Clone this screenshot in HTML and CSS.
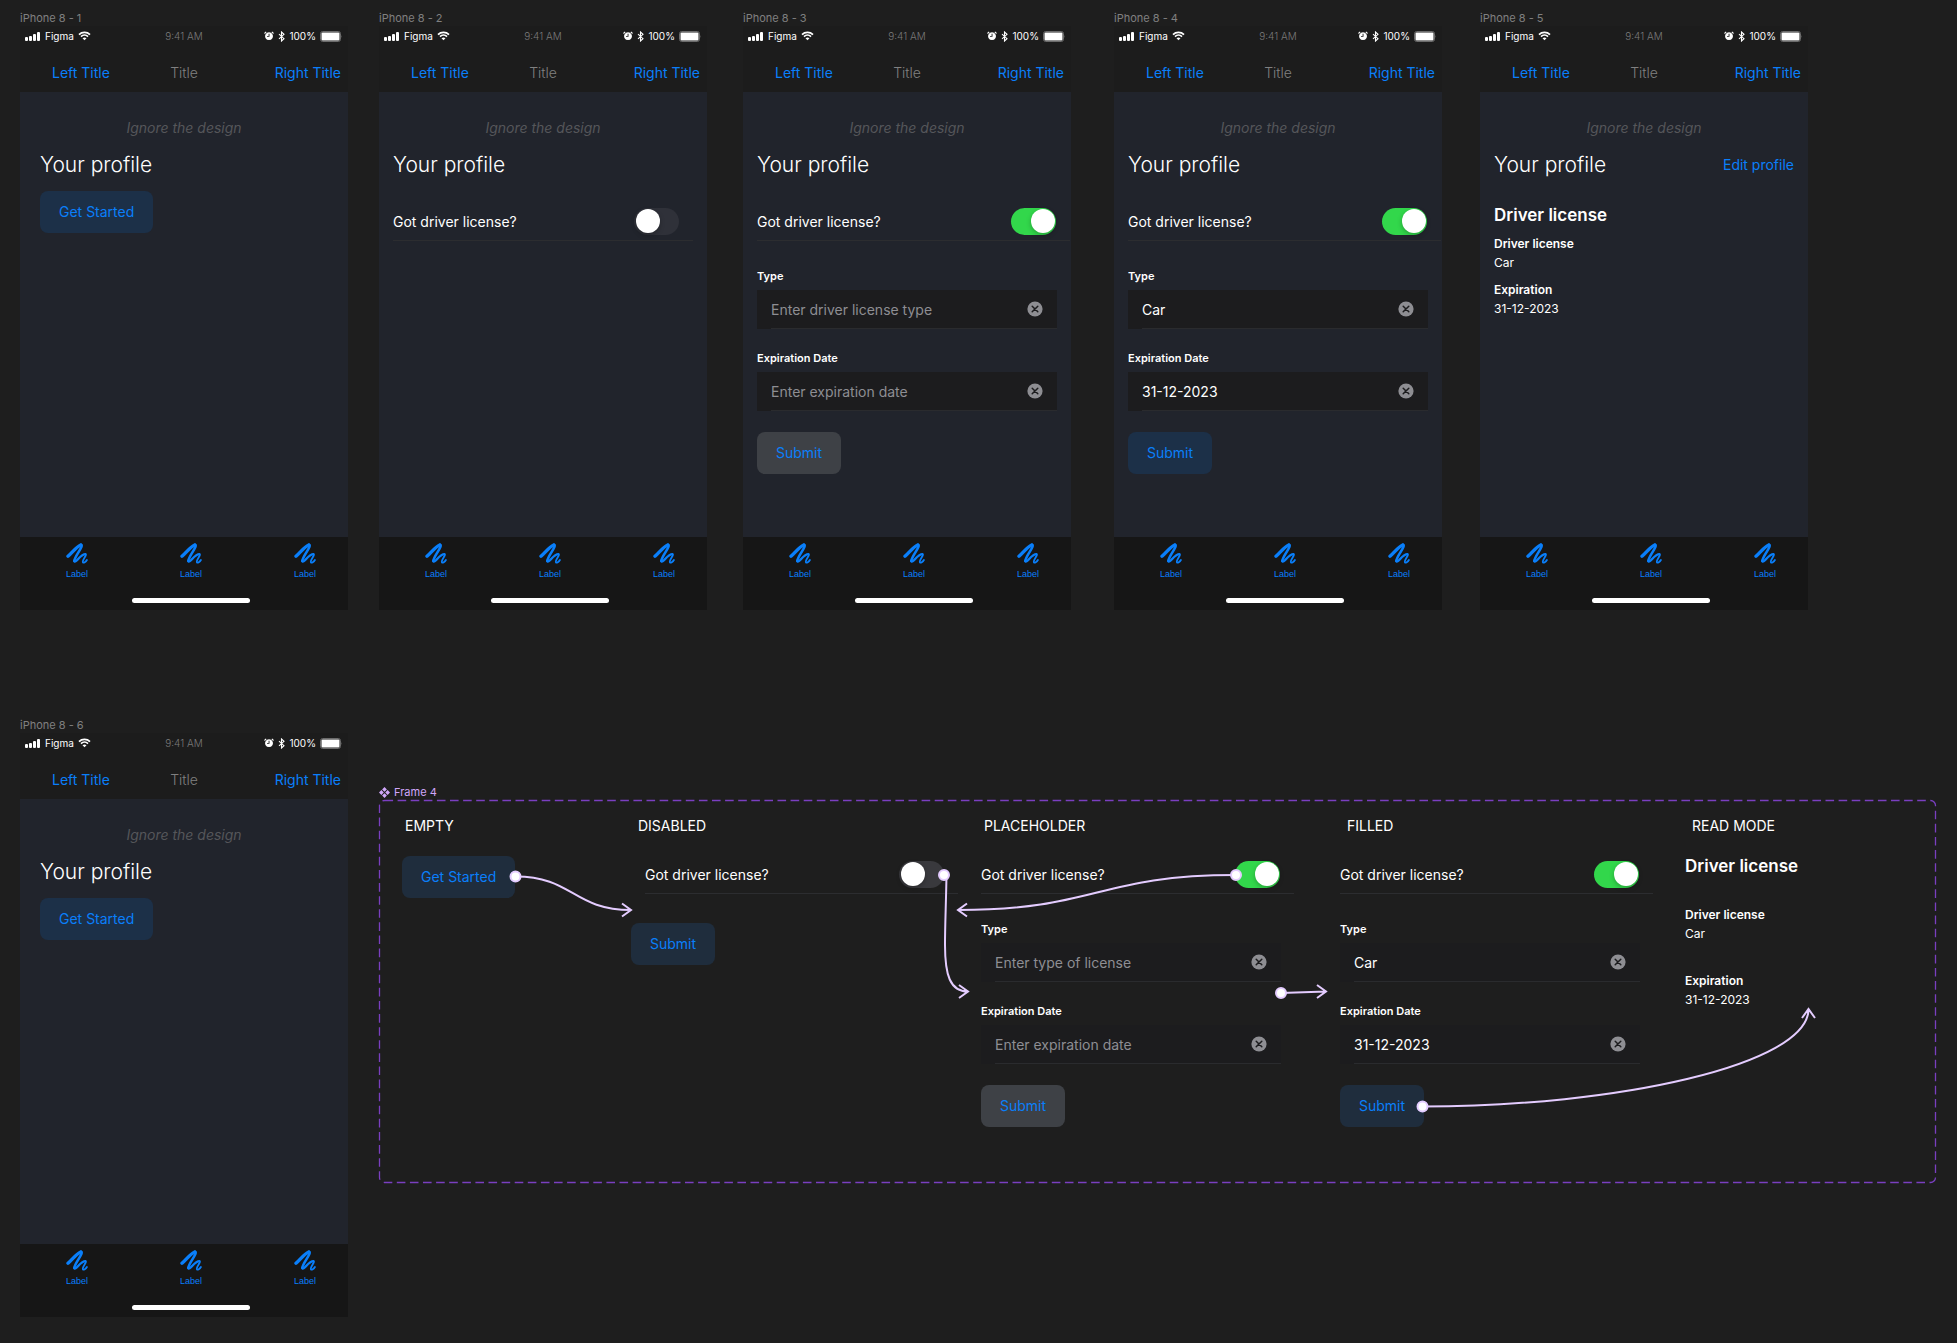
FILE: index.html
```html
<!DOCTYPE html>
<html lang="en">
<head>
<meta charset="utf-8">
<meta name="viewport" content="width=device-width, initial-scale=1">
<title>Driver license flow</title>
<link rel="stylesheet" href="styles.css">
</head>
<body>
<svg class="sprite" aria-hidden="true">
  <symbol id="signal" viewBox="0 0 16 10"><rect x="0" y="6" width="3" height="4" rx="1"/><rect x="4" y="5" width="3" height="5" rx="1"/><rect x="8" y="3" width="3" height="7" rx="1"/><rect x="12" y="1" width="3" height="9" rx="1"/></symbol>
  <symbol id="wifi" viewBox="0 0 13 10"><path d="M1 3.6C4 .6 9 .6 12 3.6M3 5.7C5 3.7 8 3.7 10 5.7" fill="none" stroke="currentColor" stroke-width="1.7"/><path d="M4.5 7.2Q6.500 5.600 8.500 7.200L6.500 9.300Z"/></symbol>
  <symbol id="alarm" viewBox="0 0 10 10"><path d="M5 1.300a3.900 3.900 0 1 0 .01 0ZM5.500 2.800V5.800H3V4.900H4.600V2.800Z" fill-rule="evenodd"/><path d="M.5 2.500L2.200.9M9.500 2.500L7.800.9" stroke="currentColor" stroke-width="1.100"/></symbol>
  <symbol id="bluetooth" viewBox="0 0 7 11"><path d="M1 3.200L6 7.700L3.500 10V1L6 3.300L1 7.800" fill="none" stroke="currentColor" stroke-width="1.100"/></symbol>
  <symbol id="battery" viewBox="0 0 23 11"><rect x=".5" y=".5" width="20" height="10" rx="2.200" fill="none" stroke="#6b6b6b"/><rect x="1.500" y="1.500" width="18" height="8" rx="1"/><path d="M21.500 4Q22.600 5.500 21.500 7Z" fill="#6b6b6b"/></symbol>
  <symbol id="scribble" viewBox="0 0 22 21"><g fill="none" stroke="currentColor" stroke-linecap="round" stroke-linejoin="round"><path d="M2 13.200C6.500 9.500 10 4 14.800 2" stroke-width="3.400"/><path d="M14.800 1.900C18.600 2.200 8.400 13.500 8.300 18" stroke-width="2.600"/><path d="M8.300 18C9.200 21.400 14.500 11 19.400 11.200" stroke-width="2.200"/><path d="M19.400 11.200C21.600 11.800 15.400 17.500 17 19.400C17.600 20.200 19.900 18.800 20.900 17" stroke-width="1.800"/></g></symbol>
  <symbol id="clear" viewBox="0 0 16 16"><circle cx="8" cy="8" r="7.600"/><path d="M5.200 5.200L10.800 10.800M10.800 5.200L5.200 10.800" stroke="#1c1c1e" stroke-width="1.500" stroke-linecap="round"/></symbol>
  <symbol id="component" viewBox="0 0 12 12"><path d="M6 0L8.600 2.600L6 5.200L3.400 2.600ZM6 6.800L8.600 9.400L6 12L3.400 9.400ZM2.600 3.400L5.200 6L2.600 8.600L0 6ZM9.400 3.400L12 6L9.400 8.600L6.800 6Z"/></symbol>
</svg>

<main class="canvas">

  <section class="artboard artboard-1">
    <h2 class="artboard-name">iPhone 8 - 1</h2>
    <div class="phone">
      <div class="status"><span class="status-side"><svg class="i-signal"><use href="#signal"/></svg>Figma<svg class="i-wifi"><use href="#wifi"/></svg></span><span class="time">9:41 AM</span><span class="status-side end"><svg class="i-alarm"><use href="#alarm"/></svg><svg class="i-bluetooth"><use href="#bluetooth"/></svg>100%<svg class="i-battery"><use href="#battery"/></svg></span></div>
      <nav class="navbar"><a href="#">Left Title</a><span class="nav-title">Title</span><a href="#" class="end">Right Title</a></nav>
      <div class="screen inset">
        <p class="note">Ignore the design</p>
        <div class="heading"><h1>Your profile</h1></div>
        <button type="button" class="button">Get Started</button>
      </div>
      <nav class="tabbar"><a href="#"><svg><use href="#scribble"/></svg>Label</a><a href="#"><svg><use href="#scribble"/></svg>Label</a><a href="#"><svg><use href="#scribble"/></svg>Label</a><span class="home"></span></nav>
    </div>
  </section>

  <section class="artboard artboard-2">
    <h2 class="artboard-name">iPhone 8 - 2</h2>
    <div class="phone">
      <div class="status"><span class="status-side"><svg class="i-signal"><use href="#signal"/></svg>Figma<svg class="i-wifi"><use href="#wifi"/></svg></span><span class="time">9:41 AM</span><span class="status-side end"><svg class="i-alarm"><use href="#alarm"/></svg><svg class="i-bluetooth"><use href="#bluetooth"/></svg>100%<svg class="i-battery"><use href="#battery"/></svg></span></div>
      <nav class="navbar"><a href="#">Left Title</a><span class="nav-title">Title</span><a href="#" class="end">Right Title</a></nav>
      <div class="screen">
        <p class="note">Ignore the design</p>
        <div class="heading"><h1>Your profile</h1></div>
        <form class="form">
          <div class="question short"><label for="own-2">Got driver license?</label><input type="checkbox" class="toggle" id="own-2"></div>
        </form>
      </div>
      <nav class="tabbar"><a href="#"><svg><use href="#scribble"/></svg>Label</a><a href="#"><svg><use href="#scribble"/></svg>Label</a><a href="#"><svg><use href="#scribble"/></svg>Label</a><span class="home"></span></nav>
    </div>
  </section>

  <section class="artboard artboard-3">
    <h2 class="artboard-name">iPhone 8 - 3</h2>
    <div class="phone">
      <div class="status"><span class="status-side"><svg class="i-signal"><use href="#signal"/></svg>Figma<svg class="i-wifi"><use href="#wifi"/></svg></span><span class="time">9:41 AM</span><span class="status-side end"><svg class="i-alarm"><use href="#alarm"/></svg><svg class="i-bluetooth"><use href="#bluetooth"/></svg>100%<svg class="i-battery"><use href="#battery"/></svg></span></div>
      <nav class="navbar"><a href="#">Left Title</a><span class="nav-title">Title</span><a href="#" class="end">Right Title</a></nav>
      <div class="screen">
        <p class="note">Ignore the design</p>
        <div class="heading"><h1>Your profile</h1></div>
        <form class="form">
          <div class="question"><label for="own-3">Got driver license?</label><input type="checkbox" class="toggle" id="own-3" checked></div>
          <div class="field"><label for="type-3">Type</label><div class="box"><div class="line"><input type="text" id="type-3" placeholder="Enter driver license type"><button type="button" class="clear" aria-label="Clear"><svg><use href="#clear"/></svg></button></div></div></div>
          <div class="field"><label for="date-3">Expiration Date</label><div class="box"><div class="line"><input type="text" id="date-3" placeholder="Enter expiration date"><button type="button" class="clear" aria-label="Clear"><svg><use href="#clear"/></svg></button></div></div></div>
          <button type="button" class="button muted">Submit</button>
        </form>
      </div>
      <nav class="tabbar"><a href="#"><svg><use href="#scribble"/></svg>Label</a><a href="#"><svg><use href="#scribble"/></svg>Label</a><a href="#"><svg><use href="#scribble"/></svg>Label</a><span class="home"></span></nav>
    </div>
  </section>

  <section class="artboard artboard-4">
    <h2 class="artboard-name">iPhone 8 - 4</h2>
    <div class="phone">
      <div class="status"><span class="status-side"><svg class="i-signal"><use href="#signal"/></svg>Figma<svg class="i-wifi"><use href="#wifi"/></svg></span><span class="time">9:41 AM</span><span class="status-side end"><svg class="i-alarm"><use href="#alarm"/></svg><svg class="i-bluetooth"><use href="#bluetooth"/></svg>100%<svg class="i-battery"><use href="#battery"/></svg></span></div>
      <nav class="navbar"><a href="#">Left Title</a><span class="nav-title">Title</span><a href="#" class="end">Right Title</a></nav>
      <div class="screen">
        <p class="note">Ignore the design</p>
        <div class="heading"><h1>Your profile</h1></div>
        <form class="form">
          <div class="question"><label for="own-4">Got driver license?</label><input type="checkbox" class="toggle" id="own-4" checked></div>
          <div class="field"><label for="type-4">Type</label><div class="box"><div class="line"><input type="text" id="type-4" value="Car"><button type="button" class="clear" aria-label="Clear"><svg><use href="#clear"/></svg></button></div></div></div>
          <div class="field"><label for="date-4">Expiration Date</label><div class="box"><div class="line"><input type="text" id="date-4" value="31-12-2023"><button type="button" class="clear" aria-label="Clear"><svg><use href="#clear"/></svg></button></div></div></div>
          <button type="button" class="button">Submit</button>
        </form>
      </div>
      <nav class="tabbar"><a href="#"><svg><use href="#scribble"/></svg>Label</a><a href="#"><svg><use href="#scribble"/></svg>Label</a><a href="#"><svg><use href="#scribble"/></svg>Label</a><span class="home"></span></nav>
    </div>
  </section>

  <section class="artboard artboard-5">
    <h2 class="artboard-name">iPhone 8 - 5</h2>
    <div class="phone">
      <div class="status"><span class="status-side"><svg class="i-signal"><use href="#signal"/></svg>Figma<svg class="i-wifi"><use href="#wifi"/></svg></span><span class="time">9:41 AM</span><span class="status-side end"><svg class="i-alarm"><use href="#alarm"/></svg><svg class="i-bluetooth"><use href="#bluetooth"/></svg>100%<svg class="i-battery"><use href="#battery"/></svg></span></div>
      <nav class="navbar"><a href="#">Left Title</a><span class="nav-title">Title</span><a href="#" class="end">Right Title</a></nav>
      <div class="screen">
        <p class="note">Ignore the design</p>
        <div class="heading"><h1>Your profile</h1><a href="#">Edit profile</a></div>
        <div class="details">
          <h3>Driver license</h3>
          <dl><dt>Driver license</dt><dd>Car</dd></dl>
          <dl><dt>Expiration</dt><dd>31-12-2023</dd></dl>
        </div>
      </div>
      <nav class="tabbar"><a href="#"><svg><use href="#scribble"/></svg>Label</a><a href="#"><svg><use href="#scribble"/></svg>Label</a><a href="#"><svg><use href="#scribble"/></svg>Label</a><span class="home"></span></nav>
    </div>
  </section>

  <section class="artboard artboard-6">
    <h2 class="artboard-name">iPhone 8 - 6</h2>
    <div class="phone">
      <div class="status"><span class="status-side"><svg class="i-signal"><use href="#signal"/></svg>Figma<svg class="i-wifi"><use href="#wifi"/></svg></span><span class="time">9:41 AM</span><span class="status-side end"><svg class="i-alarm"><use href="#alarm"/></svg><svg class="i-bluetooth"><use href="#bluetooth"/></svg>100%<svg class="i-battery"><use href="#battery"/></svg></span></div>
      <nav class="navbar"><a href="#">Left Title</a><span class="nav-title">Title</span><a href="#" class="end">Right Title</a></nav>
      <div class="screen inset">
        <p class="note">Ignore the design</p>
        <div class="heading"><h1>Your profile</h1></div>
        <button type="button" class="button">Get Started</button>
      </div>
      <nav class="tabbar"><a href="#"><svg><use href="#scribble"/></svg>Label</a><a href="#"><svg><use href="#scribble"/></svg>Label</a><a href="#"><svg><use href="#scribble"/></svg>Label</a><span class="home"></span></nav>
    </div>
  </section>

  <section class="artboard component-set">
    <h2 class="artboard-name purple"><svg class="i-component"><use href="#component"/></svg>Frame 4</h2>
    <div class="variants">
      <svg class="outline" aria-hidden="true"><rect x="0.5" y="0.5" rx="5"/></svg>
      <div class="variant">
        <h3 class="variant-name">EMPTY</h3>
        <button type="button" class="button">Get Started</button>
      </div>
      <div class="variant disabled">
        <h3 class="variant-name">DISABLED</h3>
        <form class="form">
          <div class="question"><label for="own-a">Got driver license?</label><input type="checkbox" class="toggle" id="own-a"></div>
          <button type="button" class="button">Submit</button>
        </form>
      </div>
      <div class="variant">
        <h3 class="variant-name">PLACEHOLDER</h3>
        <form class="form">
          <div class="question"><label for="own-b">Got driver license?</label><input type="checkbox" class="toggle" id="own-b" checked></div>
          <div class="field"><label for="type-b">Type</label><div class="box"><div class="line"><input type="text" id="type-b" placeholder="Enter type of license"><button type="button" class="clear" aria-label="Clear"><svg><use href="#clear"/></svg></button></div></div></div>
          <div class="field"><label for="date-b">Expiration Date</label><div class="box"><div class="line"><input type="text" id="date-b" placeholder="Enter expiration date"><button type="button" class="clear" aria-label="Clear"><svg><use href="#clear"/></svg></button></div></div></div>
          <button type="button" class="button muted">Submit</button>
        </form>
      </div>
      <div class="variant wide">
        <h3 class="variant-name">FILLED</h3>
        <form class="form">
          <div class="question"><label for="own-c">Got driver license?</label><input type="checkbox" class="toggle" id="own-c" checked></div>
          <div class="field"><label for="type-c">Type</label><div class="box"><div class="line"><input type="text" id="type-c" value="Car"><button type="button" class="clear" aria-label="Clear"><svg><use href="#clear"/></svg></button></div></div></div>
          <div class="field"><label for="date-c">Expiration Date</label><div class="box"><div class="line"><input type="text" id="date-c" value="31-12-2023"><button type="button" class="clear" aria-label="Clear"><svg><use href="#clear"/></svg></button></div></div></div>
          <button type="button" class="button">Submit</button>
        </form>
      </div>
      <div class="variant wide">
        <h3 class="variant-name">READ MODE</h3>
        <div class="details">
          <h3>Driver license</h3>
          <dl><dt>Driver license</dt><dd>Car</dd></dl>
          <dl><dt>Expiration</dt><dd>31-12-2023</dd></dl>
        </div>
      </div>
      <svg class="connectors" aria-hidden="true">
        <g class="wire">
          <path d="M136.500 76.500C194 76.500 194 110 252 110M243 103.500L252 110L243 116.500"/>
          <path d="M567.500 75C567 105 566 125 566 145C566 175 571 191.500 589 191.500M580 185L589 191.500L580 198"/>
          <path d="M857 75C718 75 718 110 579 110M588 103.500L579 110L588 116.500"/>
          <path d="M902 193L947 191.500M938 185L947 191.500L938 198"/>
          <path d="M1043.500 306.500C1237 306.500 1429.500 265 1429.500 209M1423 218L1429.500 209L1436 218"/>
        </g>
        <g class="pin"><circle cx="136.500" cy="76.500" r="5"/><circle cx="565" cy="75" r="5"/><circle cx="857" cy="75" r="5"/><circle cx="902" cy="193" r="5"/><circle cx="1043.500" cy="306.500" r="5"/></g>
      </svg>
    </div>
  </section>

</main>
</body>
</html>
```

FILE: styles.css
```css
* { box-sizing: border-box; margin: 0; padding: 0; }

:root {
  --blue: #0a7ffa;
  --canvas: #1e1e1e;
  --tint: #1f2d3d;
}

body {
  background: var(--canvas);
  color: #fff;
  font-family: Inter, "Liberation Sans", sans-serif;
  font-size: 14px;
  font-weight: 400;
  line-height: 20px;
}

button, input { font: inherit; color: inherit; border: 0; background: none; }
a { color: var(--blue); text-decoration: none; }
svg { display: block; fill: currentColor; flex: none; }
.sprite { position: absolute; width: 0; height: 0; }

/* Free canvas that holds the artboards */
.canvas { position: relative; min-height: 100vh; overflow: hidden; }
.artboard { position: absolute; width: 328px; top: 10px; }
.artboard-1 { left: 20px; }
.artboard-2 { left: 379px; }
.artboard-3 { left: 743px; }
.artboard-4 { left: 1114px; }
.artboard-5 { left: 1480px; }
.artboard-6 { left: 20px; top: 717px; }
.component-set { left: 379px; right: 21px; top: 784px; width: auto; }

.artboard-name {
  display: flex;
  align-items: center;
  gap: 4px;
  height: 16px;
  color: #808080;
  font-size: 11px;
  font-weight: 400;
  line-height: 16px;
}
.purple { color: #d0a6fa; }
.i-component { width: 11px; height: 11px; }

/* Phone shell */
.phone { background: #1c1c1c; overflow: hidden; }
.status {
  display: grid;
  grid-template-columns: 1fr auto 1fr;
  align-items: center;
  height: 20px;
  padding: 0 5px;
  font-size: 10px;
}
.status-side { display: flex; align-items: center; gap: 4px; }
.time { color: #7a7a7a; font-weight: 300; }
.status .end { justify-content: flex-end; }
.i-signal { width: 16px; height: 10px; }
.i-wifi { width: 13px; height: 10px; }
.i-alarm { width: 10px; height: 10px; }
.i-bluetooth { width: 7px; height: 11px; }
.i-battery { width: 23px; height: 11px; }

.navbar {
  display: grid;
  grid-template-columns: 1fr auto 1fr;
  align-items: center;
  height: 46px;
  padding: 8px 7px 0 32px;
}
.nav-title { color: #808080; font-weight: 300; padding-right: 25px; }
.navbar .end { text-align: right; }

.screen { min-height: 445px; padding: 26px 14px 20px; background: #21242c; --tint: #1c3048; --off: #2f3139; }
.screen.inset { padding-left: 20px; padding-right: 20px; }
.note { color: #55565a; font-style: italic; text-align: center; margin-bottom: 14px; }
.heading { display: flex; align-items: center; justify-content: space-between; }
.heading h1 { font-size: 21px; font-weight: 300; line-height: 26px; }
.screen .button { margin-top: 13px; }
.screen .form { margin-top: 30px; }
.screen .details { margin-top: 26px; }

.tabbar {
  display: grid;
  grid-template-columns: repeat(3, 114px);
  align-content: start;
  width: 342px;
  height: 73px;
  padding-top: 6px;
  background: #161616;
}
.tabbar a {
  display: flex;
  flex-direction: column;
  align-items: center;
  gap: 4px;
  font: 9px/12px "Liberation Sans", Arial, sans-serif;
}
.tabbar svg { width: 22px; height: 21px; }
.home {
  grid-column: 2;
  justify-self: center;
  width: 118px;
  height: 5px;
  margin-top: 18px;
  border-radius: 3px;
  background: #fff;
}

/* Controls */
.button {
  display: block;
  height: 42px;
  padding: 0 19px;
  border-radius: 8px;
  background: var(--tint);
  color: var(--blue);
}
.screen .form .button { margin-top: 21px; }
.button.muted { background: #3e4146; }

.form { width: 300px; }
.question {
  display: flex;
  align-items: flex-start;
  justify-content: space-between;
  width: 313px;
  height: 33px;
  padding-right: 14px;
  border-bottom: 1px solid #2c2d30;
}
.question.short { width: 300px; }
.question label { line-height: 27px; }
.toggle {
  appearance: none;
  width: 45px;
  height: 27px;
  padding: 2px;
  border-radius: 14px;
  background: var(--off, #39393d);
}
.toggle::before {
  content: "";
  display: block;
  width: 24px;
  height: 24px;
  margin-top: -1px;
  border-radius: 50%;
  background: #fff;
  box-shadow: 0 2px 5px rgba(0, 0, 0, .25);
}
.toggle:checked { background: #32d74b; }
.toggle:checked::before { margin-left: 18px; }

.field { margin-top: 21px; }
.question + .field { margin-top: 27px; }
.field label { display: block; height: 22px; font-size: 11px; font-weight: 600; line-height: 16px; }
.box { height: 39px; padding-left: 14px; background: #1c1c1e; }
.line { display: flex; align-items: center; height: 39px; padding-right: 14px; border-bottom: 1px solid #2a2b2e; }
.line input { flex: 1; min-width: 0; height: 38px; outline: 0; }
.line input::placeholder { color: #8e8e93; opacity: 1; }
.clear { width: 16px; height: 16px; color: #8e8e93; }
.clear svg { width: 16px; height: 16px; }
.form .button { margin-top: 21px; }

.details { display: grid; gap: 8px; }
.details h3 { font-size: 17px; font-weight: 600; line-height: 22px; }
.details dl { font-size: 12px; line-height: 19px; }
.details dt { font-weight: 600; }

/* Component set with its variants and the flow between them */
.variants {
  position: relative;
  display: grid;
  grid-template-columns: 229px 350px 359px 345px 1fr;
  min-height: 383px;
  padding: 16px 0 0 23px;
}
.outline, .connectors { position: absolute; inset: 0; width: 100%; height: 100%; overflow: visible; pointer-events: none; }
.outline rect { width: calc(100% - 1px); height: calc(100% - 1px); fill: none; stroke: #7a3fc0; stroke-width: 1.3; stroke-dasharray: 8.600 4.500; }
.variant-name { padding-left: 3px; font-size: 14px; font-weight: 400; }
.wide .variant-name, .disabled .variant-name { padding-left: 7px; }
.variant > .button { margin-top: 20px; }
.variant .form { margin-top: 25px; }
.variant .details { margin-top: 19px; gap: 28px; }
.disabled .question { margin-left: 14px; }
.disabled .form .button { margin-top: 29px; }
.wire { fill: none; stroke: #e4ccff; stroke-width: 2; }
.pin { fill: #fff; stroke: #e4ccff; stroke-width: 2; }
```
